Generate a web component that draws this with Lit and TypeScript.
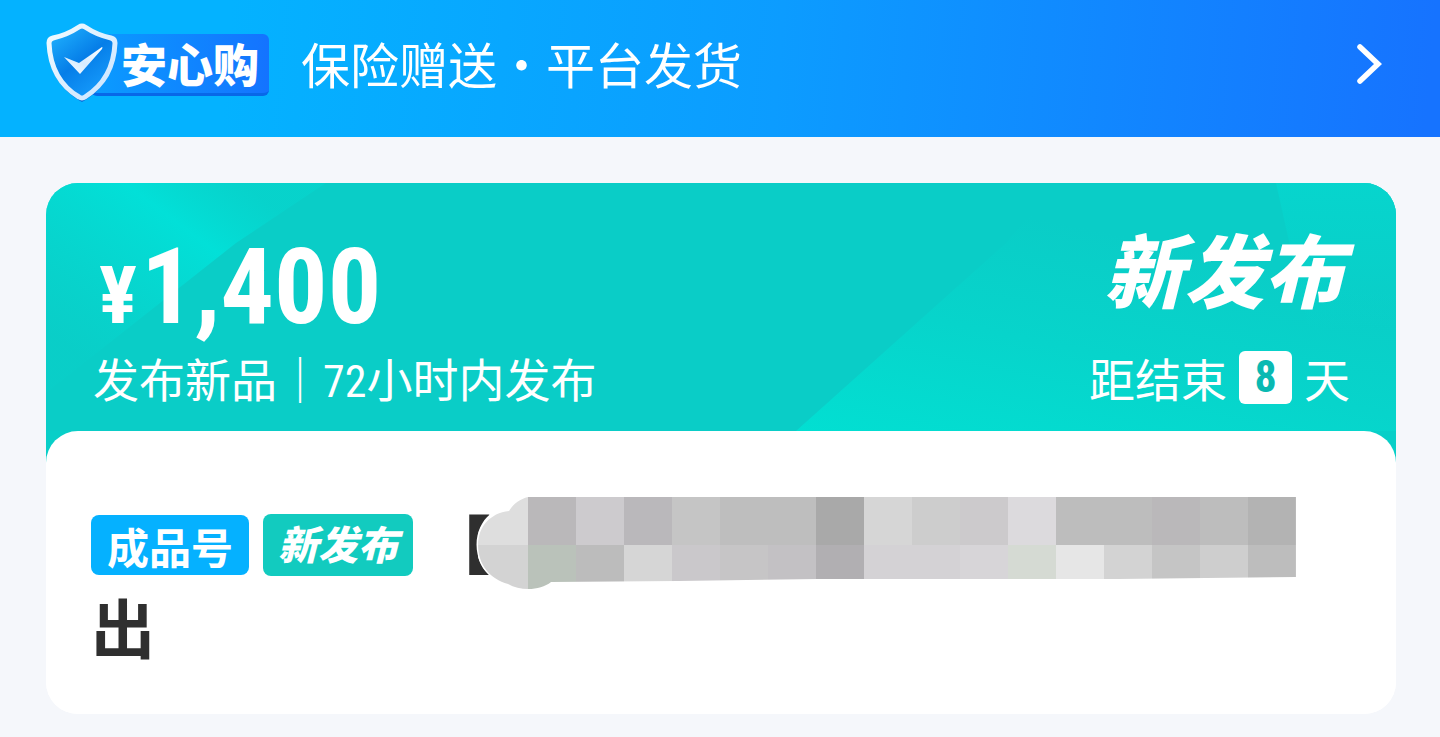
import { LitElement, html, css, svg } from "lit";
import { customElement, property } from "lit/decorators.js";

const CELL = 48;
const MOSAIC = [
  ["#dedede", "#bab8ba", "#cdcbce", "#bab8bb", "#c5c5c5", "#bebebe", "#bebebe", "#a9a9a9", "#d6d6d6", "#cdcdcd", "#cccacc", "#dcdadd", "#bdbdbd", "#bdbdbd", "#bab8ba", "#bdbdbd", "#b3b3b3"],
  ["#d3d3d3", "#bac2ba", "#bcbcbc", "#d6d6d6", "#cac8cb", "#c6c5c6", "#c3c1c4", "#b1afb2", "#d4d2d5", "#d4d2d5", "#d7d5d8", "#d5dad3", "#e6e6e6", "#d3d3d3", "#c5c5c5", "#cecece", "#bdbdbd"],
];

@customElement("assurance-badge")
export class AssuranceBadge extends LitElement {
  static styles = css`
    :host { display: flex; align-items: center; flex: none; }
    .shield { position: relative; width: 74px; height: 80px; flex: none; display: block; }
    .name {
      margin: 4px 0 0 -28px;
      padding: 0 10px 0 30px;
      height: 62px;
      line-height: 56px;
      box-sizing: border-box;
      border-radius: 6px;
      border-bottom: 3px solid #0868e8;
      background: linear-gradient(90deg, #0a9cff, #1473ff);
      font-size: 46px;
      font-weight: 900;
    }
  `;
  render() {
    return html`
      <svg class="shield" viewBox="0 0 74 80" aria-hidden="true">
        <defs>
          <linearGradient id="face" x1="0.1" y1="0" x2="0.8" y2="1">
            <stop offset="0" stop-color="#20b4ff" />
            <stop offset="0.5" stop-color="#067ee8" />
            <stop offset="1" stop-color="#18a0ff" />
          </linearGradient>
          <linearGradient id="rim" x1="0" y1="0" x2="1" y2="1">
            <stop offset="0" stop-color="#f2fbff" />
            <stop offset="1" stop-color="#c9e4ff" />
          </linearGradient>
          <linearGradient id="tick" x1="0" y1="1" x2="1" y2="0">
            <stop offset="0" stop-color="#fff" />
            <stop offset="0.45" stop-color="#d6ebff" />
            <stop offset="1" stop-color="#fff" />
          </linearGradient>
        </defs>
        <path d="M37 5 Q52 15 70 19 C71 48 58 67 37 79 C16 67 2 48 3 19 Q22 15 37 5Z" fill="#0868d8" />
        <path d="M34 4 Q37 2 40 4 Q52 12 66 15 Q70 16 70 20 C69 44 59 62 40 74 Q37 76 34 74 C14 62 5 44 4 20 Q4 16 8 15 Q22 12 34 4Z" fill="url(#face)" stroke="url(#rim)" stroke-width="5" stroke-linejoin="round" />
        <path d="M19 34 L34 40 L57 24 Q58 24 57 26 L35 51Z" fill="url(#tick)" />
      </svg>
      <span class="name">安心购</span>
    `;
  }
}

@customElement("masked-title")
export class MaskedTitle extends LitElement {
  static styles = css`
    :host { display: block; flex: 1; min-width: 0; }
    svg { display: block; width: 100%; max-width: 820px; height: auto; }
  `;
  render() {
    const outline =
      "M50 0 H818 V80 L640 82 L340 82 L200 84 L73 85 C62 94 42 94 30 87 C12 82 0 68 0 48 C0 30 12 16 31 14 C35 7 42 2 50 0Z";
    return html`
      <svg viewBox="0 0 820 96" aria-hidden="true">
        <clipPath id="brush"><path d=${outline} /></clipPath>
        <path d=${outline} fill="#fff" stroke="#fff" stroke-width="3" />
        <g clip-path="url(#brush)" shape-rendering="crispEdges">
          ${MOSAIC.map((row, r) =>
            row.map(
              (fill, c) =>
                svg`<rect x=${2 + c * CELL} y=${r * CELL} width=${CELL} height=${CELL} fill=${fill} />`
            )
          )}
          <rect x="0" y="0" width="2" height="48" fill=${MOSAIC[0][0]} />
          <rect x="0" y="48" width="2" height="48" fill=${MOSAIC[1][0]} />
        </g>
      </svg>
    `;
  }
}

@customElement("app-root")
export class AppRoot extends LitElement {
  @property({ type: Number }) price = 1400;
  @property({ type: Number }) days = 8;

  static styles = css`
    :host {
      display: block;
      min-height: 100vh;
      background: #f5f7fb;
      color: #fff;
      font-family: "Noto Sans CJK SC", sans-serif;
    }
    .banner {
      display: flex;
      align-items: center;
      gap: 32px;
      height: 137px;
      padding: 0 56px 12px 45px;
      box-sizing: border-box;
      background: linear-gradient(95deg, #04b2ff 16%, #0c9cff 54%, #1673ff 99%);
      color: #fff;
      text-decoration: none;
    }
    .slogan { flex: 1; font-size: 49px; line-height: 60px; white-space: nowrap; }
    .chevron { width: 30px; height: 44px; flex: none; }
    .card {
      margin: 46px 44px 22px 46px;
      border-radius: 32px;
      overflow: hidden;
      background: #fff;
    }
    .top { position: relative; background: #0acdc7; }
    .rays { position: absolute; inset: 0; width: 100%; height: 100%; }
    .summary {
      position: relative;
      display: flex;
      justify-content: space-between;
      padding: 44px 46px 24px 47px;
      box-sizing: border-box;
    }
    .left, .right { display: flex; flex-direction: column; justify-content: space-between; }
    .right { align-items: flex-end; }
    .price {
      display: flex;
      align-items: baseline;
      gap: 4px;
      padding-left: 6px;
      font-family: "Roboto Condensed", Roboto, sans-serif;
      font-weight: 700;
      font-size: 106px;
      line-height: 120px;
    }
    .currency { font-size: 80px; line-height: 80px; }
    .note { font-size: 46px; line-height: 60px; white-space: nowrap; }
    .num { font-family: "Roboto Condensed", Roboto, sans-serif; font-size: 44px; line-height: 44px; }
    .stamp { padding-right: 6px; font-size: 80px; line-height: 80px; font-weight: 900; font-style: italic; white-space: nowrap; }
    .countdown { display: flex; align-items: center; gap: 12px; }
    .days {
      width: 53px;
      height: 53px;
      line-height: 53px;
      border-radius: 6px;
      background: #fff;
      color: #0ab9b2;
      text-align: center;
      font-weight: 700;
    }
    .body {
      min-height: 283px;
      padding: 62px 98px 40px 45px;
      box-sizing: border-box;
      border-radius: 32px;
      background: #fff;
      color: #2f2f2f;
    }
    .skirt { background: linear-gradient(#08cfc8 50%, #fff 50%); }
    .line { display: flex; align-items: center; height: 104px; }
    .tag {
      flex: none;
      box-sizing: border-box;
      border-radius: 8px;
      color: #fff;
      font-weight: 700;
      height: 60px;
      padding: 0 16px;
      margin-right: 14px;
      background: #05b1ff;
      font-size: 42px;
      line-height: 62px;
    }
    .fresh { height: 62px; padding: 0 15px; background: #12cbbf; font-size: 40px; line-height: 58px; font-style: italic; font-weight: 900; }
    .title { margin: 0; font-size: 64px; line-height: 56px; font-weight: 700; }
    .open { flex: none; padding-bottom: 8px; }
    masked-title { position: relative; margin-left: -13px; }
  `;

  render() {
    return html`
      <a class="banner" href="#">
        <assurance-badge></assurance-badge>
        <span class="slogan">保险赠送・平台发货</span>
        <svg class="chevron" viewBox="0 0 30 44" aria-hidden="true">
          <path d="M6 6 L24 23 L6 40" fill="none" stroke="#fff" stroke-width="5.5" stroke-linecap="round" />
        </svg>
      </a>
      <main class="card">
        <section class="top">
          <svg class="rays" viewBox="0 0 1350 248" preserveAspectRatio="none" aria-hidden="true">
            <defs>
              <linearGradient id="a" x1="0" y1="0.7" x2="0.7" y2="0">
                <stop offset="0" stop-color="#06d8d0" stop-opacity="0.1" />
                <stop offset="0.7" stop-color="#02e0d8" />
                <stop offset="1" stop-color="#05d8d0" stop-opacity="0.5" />
              </linearGradient>
              <linearGradient id="b" x1="0" y1="1" x2="0.5" y2="0">
                <stop offset="0" stop-color="#02dfd2" />
                <stop offset="0.45" stop-color="#07d4cb" />
                <stop offset="0.85" stop-color="#0acdc7" />
              </linearGradient>
              <linearGradient id="c" x1="0" y1="0" x2="0" y2="1">
                <stop offset="0" stop-color="#05d8d0" stop-opacity="0.7" />
                <stop offset="0.6" stop-color="#05d8d0" stop-opacity="0" />
              </linearGradient>
            </defs>
            <path d="M0 0 H280 L190 60 L0 210Z" fill="url(#a)" />
            <path d="M750 248 L960 60 L1010 0 H1350 V248Z" fill="url(#b)" />
            <path d="M1230 0 H1350 V248 L1270 180Z" fill="url(#c)" />
          </svg>
          <div class="summary">
            <div class="left">
              <div class="price"><span class="currency">¥</span><span>${this.price.toLocaleString("en-US")}</span></div>
              <div class="note">发布新品｜<span class="num">72</span>小时内发布</div>
            </div>
            <div class="right">
              <div class="stamp">新发布</div>
              <div class="note countdown">
                <span>距结束</span><span class="num days">${this.days}</span><span>天</span>
              </div>
            </div>
          </div>
        </section>
        <div class="skirt">
          <section class="body">
            <h1 class="title">
              <div class="line">
                <span class="tag">成品号</span><span class="tag fresh">新发布</span>
                <span class="open">【</span><masked-title></masked-title>
              </div>
              出
            </h1>
          </section>
        </div>
      </main>
    `;
  }
}
